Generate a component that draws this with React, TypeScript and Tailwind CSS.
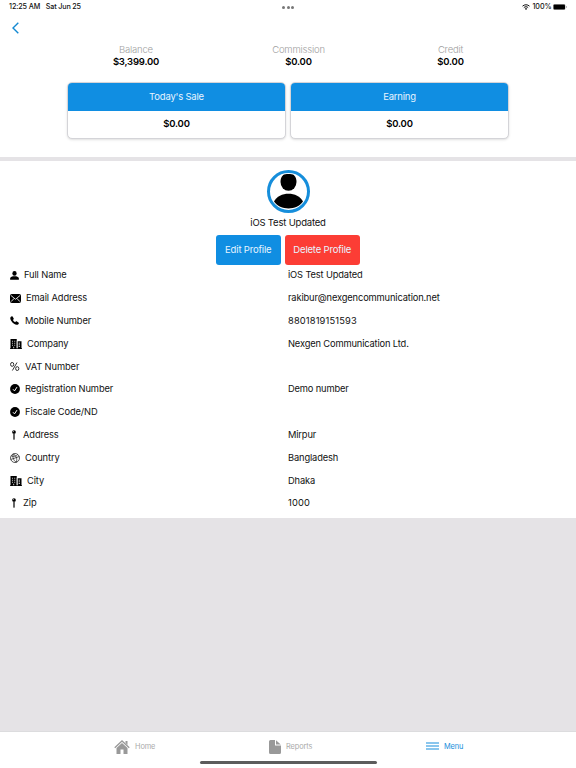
import React from "react";

const PersonIcon = () => (
  <svg width="9" height="9" viewBox="0 0 18 18">
    <ellipse cx="9" cy="4.8" rx="4.3" ry="4.8" />
    <path d="M0.3 17.5v-2.500c0-2.600 3.500-4 5.700-4.300h6c2.200.3 5.700 1.700 5.700 4.300v2.500z" />
  </svg>
);

const MailIcon = () => (
  <svg width="11" height="9" viewBox="0 0 22 18">
    <rect width="22" height="18" rx="3.5" />
    <path
      d="M2.500 3.500l8.500 7 8.500-7M2.500 14.800l5.500-5.600M19.500 14.800L14 9.200"
      fill="none"
      stroke="#fff"
      strokeWidth="1.700"
      strokeLinecap="round"
    />
  </svg>
);

const PhoneIcon = () => (
  <svg width="9" height="9" viewBox="0 0 18 18">
    <path d="M1.8 1.5C3 .3 4.300 0 5.100 1.200l2.100 3.200c.6.9.4 1.700-.3 2.400l-1.100 1.100c.9 1.900 2.500 3.500 4.500 4.500l1.200-1.200c.7-.7 1.500-.8 2.300-.3l3.100 2.200c1.200.8 1 2-.2 3.200-1.900 2-5 1.900-8.700-.6C5.700 14 3.800 12 2 9 .1 5.800 0 3.300 1.800 1.500z" />
  </svg>
);

const BuildingIcon = () => (
  <svg width="12" height="10" viewBox="0 0 24 20">
    <path d="M1 0h12.500v18.500h1.500V4.500H23v14h1V20H0v-1.500h1z" />
    <path
      d="M4.500 3.500h1.500v2H4.500zM8.800 3.500h1.500v2H8.800zM4.500 7.500h1.500v2H4.500zM8.800 7.500h1.500v2H8.800zM4.500 11.500h1.500v2H4.500zM8.800 11.500h1.500v2H8.800zM6.700 15.500h1.600v3H6.700zM13.500 3.500h1.300v15h-1.300zM17.300 7.500h2.700v1.300h-2.700zM17.300 11h2.700v1.300h-2.700zM17.300 14.500h2.700v1.300h-2.700z"
      fill="#fff"
    />
  </svg>
);

const PercentIcon = () => (
  <svg width="9.500" height="9" viewBox="0 0 19 18" fill="none" stroke="#111" strokeWidth="1.700">
    <ellipse cx="4.300" cy="4.800" rx="3.200" ry="3.900" />
    <ellipse cx="14.500" cy="13.200" rx="3.200" ry="3.900" />
    <path d="M14 1L4.800 17" />
  </svg>
);

const CheckIcon = () => (
  <svg width="10" height="10" viewBox="0 0 20 20">
    <circle cx="10" cy="10" r="9.800" />
    <path d="M6 10.500l3 3.300 5-7.600" fill="none" stroke="#fff" strokeWidth="2" />
  </svg>
);

const PinIcon = () => (
  <svg width="8" height="10" viewBox="0 0 16 20">
    <circle cx="8" cy="4" r="3.700" />
    <path d="M6.800 7h2.400v11.500L8 19.800l-1.200-1.300z" />
    <circle cx="7" cy="3" r="1" fill="#aaa" />
  </svg>
);

const GlobeIcon = () => (
  <svg width="10" height="10" viewBox="0 0 20 20" fill="none" stroke="#222" strokeWidth="1.500">
    <circle cx="10" cy="10" r="9" />
    <path d="M6.500 2c-2 5 0 13 6 16.500M6.500 2c5 2.500 9 9 6 16.500M1.500 13l17-6M2.500 6c5 1.500 10 .5 13-3" />
  </svg>
);

const stats = [
  { label: "Balance", value: "$3,399.00", width: "w-[124px]" },
  { label: "Commission", value: "$0.00", width: "w-[201px]" },
  { label: "Credit", value: "$0.00", width: "w-[103px]" },
];

const sales = [
  { title: "Today's Sale", value: "$0.00" },
  { title: "Earning", value: "$0.00" },
];

const details = [
  { icon: <PersonIcon />, label: "Full Name", value: "iOS Test Updated", gap: "gap-[5px]" },
  { icon: <MailIcon />, label: "Email Address", value: "rakibur@nexgencommunication.net", gap: "gap-[5px]" },
  { icon: <PhoneIcon />, label: "Mobile Number", value: "8801819151593", gap: "gap-[6px]", numeric: true },
  { icon: <BuildingIcon />, label: "Company", value: "Nexgen Communication Ltd.", gap: "gap-[5px]" },
  { icon: <PercentIcon />, label: "VAT Number", value: "", gap: "gap-[5.500px]" },
  { icon: <CheckIcon />, label: "Registration Number", value: "Demo number", gap: "gap-[5px]" },
  { icon: <CheckIcon />, label: "Fiscale Code/ND", value: "", gap: "gap-[5px]" },
  { icon: <PinIcon />, label: "Address", value: "Mirpur", gap: "gap-[5px]" },
  { icon: <GlobeIcon />, label: "Country", value: "Bangladesh", gap: "gap-[5px]" },
  { icon: <BuildingIcon />, label: "City", value: "Dhaka", gap: "gap-[5px]" },
  { icon: <PinIcon />, label: "Zip", value: "1000", gap: "gap-[5px]", numeric: true },
];

const StatusBar = () => (
  <div className="grid h-[14px] shrink-0 grid-cols-3 items-center text-[7.200px] font-medium">
    <div className="flex gap-[5.500px] pl-[9px]">
      <span className="tracking-[-0.100px]">12:25 AM</span>
      <span className="tracking-[-0.150px]">Sat Jun 25</span>
    </div>
    <div className="flex justify-center gap-[1.500px]">
      <span className="size-[3px] rounded-full bg-[#777]" />
      <span className="size-[3px] rounded-full bg-[#777]" />
      <span className="size-[3px] rounded-full bg-[#777]" />
    </div>
    <div className="flex items-center justify-end pr-[9px]">
      <svg width="8" height="6" viewBox="0 0 16 12" fill="none" stroke="#111" strokeWidth="2">
        <path d="M1 4.300c4-3.700 10-3.700 14 0M3.700 7.200c2.500-2.300 6.100-2.300 8.600 0" />
        <path d="M8 12L5.600 9.500c1.300-1.200 3.500-1.200 4.800 0z" fill="#111" stroke="none" />
      </svg>
      <span className="ml-[2px] tracking-[-0.100px]">100%</span>
      <svg className="ml-[1.500px]" width="14" height="6" viewBox="0 0 28 12">
        <rect x="0.500" y="0.500" width="24" height="11" rx="3" fill="none" stroke="#999" />
        <rect x="1" y="1" width="23" height="10" rx="2" />
        <path d="M26 4v4c2-.8 2-3.200 0-4z" fill="#777" />
      </svg>
    </div>
  </div>
);

const App = () => {
  return (
    <div className="flex h-[768px] w-[576px] flex-col overflow-hidden bg-[#e5e3e6] font-['Inter',sans-serif] text-[#111]">
      <div className="flex h-[157px] shrink-0 flex-col bg-white">
        <StatusBar />
        <div className="flex h-[28px] shrink-0 items-center pl-[12px]">
          <svg width="7" height="12" viewBox="0 0 7 12" fill="none" stroke="#1389d2" strokeWidth="1.400">
            <path d="M6.300 0.700L1 6l5.300 5.300" />
          </svg>
        </div>
        <div className="flex h-[40px] shrink-0 pt-[2px] pl-[74px]">
          {stats.map((stat) => (
            <div key={stat.label} className={`${stat.width} text-center leading-[12px]`}>
              <p className="text-[9.500px] font-light tracking-[-0.200px] text-[#a0a0a0]">{stat.label}</p>
              <p className="text-[9.500px] font-semibold tracking-[-0.200px] text-black">{stat.value}</p>
            </div>
          ))}
        </div>
        <div className="flex justify-center gap-[4px]">
          {sales.map((sale) => (
            <div
              key={sale.title}
              className="h-[57px] w-[219px] overflow-hidden rounded-[5px] border border-[#d4d4d8] bg-white text-center shadow-sm"
            >
              <div className="flex h-[28px] items-center justify-center bg-[#108ee2] text-[9.500px] tracking-[-0.200px] text-[#e7f4ff]">
                {sale.title}
              </div>
              <p className="text-[9.500px] leading-[25px] font-semibold tracking-[-0.200px] text-black">{sale.value}</p>
            </div>
          ))}
        </div>
      </div>

      <div className="mt-[4px] flex h-[357px] shrink-0 flex-col items-center bg-white pt-[9px]">
        <div className="flex size-[43px] items-center justify-center rounded-full border-[3px] border-[#168edb]">
          <svg width="37" height="37" viewBox="0 0 37 37">
            <path d="M13.200 1.900c2-1.100 8.600-1.100 10.600 0 1.900 1.700 2.700 4 2.700 7.100a8 8.700 0 0 1-16 0c0-3.100.8-5.400 2.700-7.100z" />
            <path d="M4 28.500c5-10.500 24-10.500 29 0C27 37.700 10 37.700 4 28.500z" />
          </svg>
        </div>
        <p className="mt-[3px] text-[9.500px] leading-[13px] tracking-[-0.190px]">iOS Test Updated</p>
        <div className="mt-[6px] flex gap-[4px] text-[9.500px] tracking-[-0.180px] text-[#e7f4ff]">
          <button className="h-[30px] w-[64.500px] rounded-[3px] bg-[#108ee2]">Edit Profile</button>
          <button className="h-[30px] w-[75.500px] rounded-[3px] bg-[#fc3d35]">Delete Profile</button>
        </div>
        <div className="-mt-[1px] w-full pl-[10px]">
          {details.map((item) => (
            <div key={item.label} className="grid h-[22.800px] grid-cols-[278px_1fr] items-center text-[9.300px] tracking-[-0.100px]">
              <div className={`flex items-center ${item.gap}`}>
                {item.icon}
                <span>{item.label}</span>
              </div>
              <span className={item.numeric ? "tracking-[0.150px]" : "tracking-[-0.140px]"}>{item.value}</span>
            </div>
          ))}
        </div>
      </div>

      <div className="mt-auto h-[37px] shrink-0 border-t border-[#dcdcde] bg-white text-[7.400px] text-[#aaa]">
        <div className="flex h-[29px] items-center pl-[114px]">
          <div className="flex w-[155px] items-center gap-[5px]">
            <svg width="16" height="14" viewBox="0 0 32 28" fill="#999">
              <path d="M16 6l11 10v12h-8v-9h-6v9H5V16z" />
              <path d="M1.500 15.500L16 2l14.500 13.500" fill="none" stroke="#999" strokeWidth="2.600" />
              <path d="M23 2h4v8l-4-4z" />
            </svg>
            <span className="tracking-[-0.100px]">Home</span>
          </div>
          <div className="flex w-[157px] items-center gap-[5px]">
            <svg width="12" height="14" viewBox="0 0 24 28" fill="#999">
              <path d="M3 0h9v11h12v14q0 3-3 3H3q-3 0-3-3V3q0-3 3-3z" />
              <path d="M14 0.500L23.500 9H14z" />
            </svg>
            <span className="tracking-[-0.100px]">Reports</span>
          </div>
          <div className="flex items-center gap-[5px] text-[#168edb]">
            <svg width="13" height="8" viewBox="0 0 13 8" stroke="#168edb" strokeWidth="1.200">
              <path d="M0 1h13M0 4h13M0 7h13" />
            </svg>
            <span className="tracking-[-0.100px]">Menu</span>
          </div>
        </div>
        <div className="mx-auto h-[3px] w-[177px] rounded-full bg-[#5c5c5c]" />
      </div>
    </div>
  );
};

export default App;
